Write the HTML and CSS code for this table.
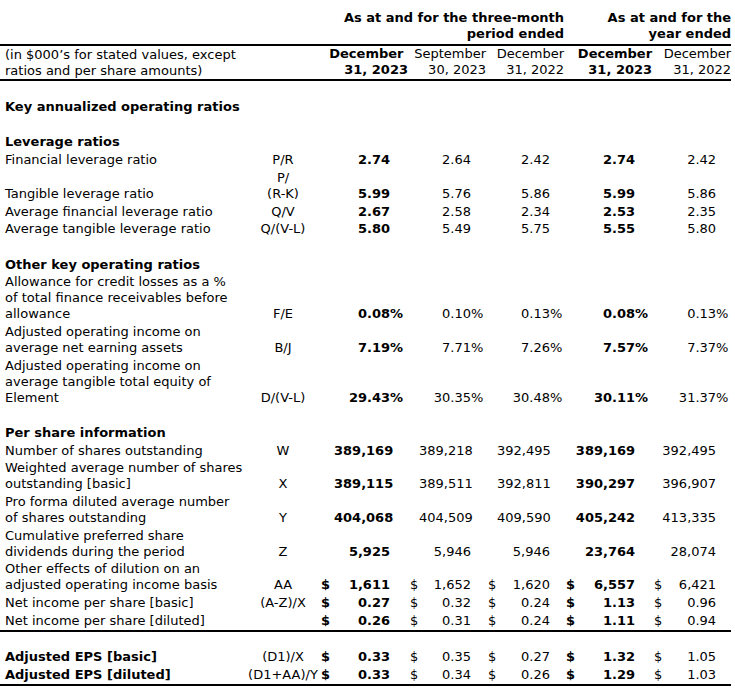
FILE: index.html
```html
<!DOCTYPE html>
<html>
<head>
<meta charset="utf-8">
<link rel="stylesheet" href="styles.css">
</head>
<body>
<table class="fin">
<colgroup>
<col class="c-label"><col class="c-form">
<col class="c-cur1"><col class="c-val1"><col class="c-pct1">
<col class="c-cur"><col class="c-val2"><col class="c-pct2">
<col class="c-cur"><col class="c-val3"><col class="c-pct3">
<col class="c-cur"><col class="c-val4"><col class="c-pct4">
<col class="c-cur5"><col class="c-val5"><col class="c-pct5">
</colgroup>
<tbody>
<tr class="rule">
<td></td><td></td>
<td colspan="9" class="hd b">As at and for the three-month<br>period ended</td>
<td colspan="6" class="hd b">As at and for the<br>year ended</td>
</tr>
<tr class="rule">
<td class="lbl">(in $000’s for stated values, except<br>ratios and per share amounts)</td><td></td>
<td colspan="3" class="hd b">December&nbsp;<br>31, 2023</td>
<td colspan="3" class="hd">September<br>30, 2023</td>
<td colspan="3" class="hd">December<br>31, 2022</td>
<td colspan="3" class="hd b">December<br>31, 2023</td>
<td colspan="3" class="hd">December<br>31, 2022</td>
</tr>
<tr class="gap"><td colspan="17">&nbsp;</td></tr>
<tr><td class="lbl b" colspan="2">Key annualized operating ratios</td><td colspan="15"></td></tr>
<tr class="gap"><td colspan="17">&nbsp;</td></tr>
<tr><td class="lbl b">Leverage ratios</td><td colspan="16"></td></tr>
<tr>
<td class="lbl">Financial leverage ratio</td><td class="frm">P/R</td>
<td></td><td class="v b">2.74</td><td></td>
<td></td><td class="v">2.64</td><td></td>
<td></td><td class="v">2.42</td><td></td>
<td></td><td class="v b">2.74</td><td></td>
<td></td><td class="v">2.42</td><td></td>
</tr>
<tr>
<td class="lbl">Tangible leverage ratio</td><td class="frm">P/<br>(R-K)</td>
<td></td><td class="v b">5.99</td><td></td>
<td></td><td class="v">5.76</td><td></td>
<td></td><td class="v">5.86</td><td></td>
<td></td><td class="v b">5.99</td><td></td>
<td></td><td class="v">5.86</td><td></td>
</tr>
<tr>
<td class="lbl">Average financial leverage ratio</td><td class="frm">Q/V</td>
<td></td><td class="v b">2.67</td><td></td>
<td></td><td class="v">2.58</td><td></td>
<td></td><td class="v">2.34</td><td></td>
<td></td><td class="v b">2.53</td><td></td>
<td></td><td class="v">2.35</td><td></td>
</tr>
<tr>
<td class="lbl">Average tangible leverage ratio</td><td class="frm">Q/(V-L)</td>
<td></td><td class="v b">5.80</td><td></td>
<td></td><td class="v">5.49</td><td></td>
<td></td><td class="v">5.75</td><td></td>
<td></td><td class="v b">5.55</td><td></td>
<td></td><td class="v">5.80</td><td></td>
</tr>
<tr class="gap"><td colspan="17">&nbsp;</td></tr>
<tr><td class="lbl b">Other key operating ratios</td><td colspan="16"></td></tr>
<tr>
<td class="lbl">Allowance for credit losses as a %<br>of total finance receivables before<br>allowance</td><td class="frm">F/E</td>
<td></td><td class="v b">0.08</td><td class="p b">%</td>
<td></td><td class="v">0.10</td><td class="p">%</td>
<td></td><td class="v">0.13</td><td class="p">%</td>
<td></td><td class="v b">0.08</td><td class="p b">%</td>
<td></td><td class="v">0.13</td><td class="p">%</td>
</tr>
<tr>
<td class="lbl">Adjusted operating income on<br>average net earning assets</td><td class="frm">B/J</td>
<td></td><td class="v b">7.19</td><td class="p b">%</td>
<td></td><td class="v">7.71</td><td class="p">%</td>
<td></td><td class="v">7.26</td><td class="p">%</td>
<td></td><td class="v b">7.57</td><td class="p b">%</td>
<td></td><td class="v">7.37</td><td class="p">%</td>
</tr>
<tr>
<td class="lbl">Adjusted operating income on<br>average tangible total equity of<br>Element</td><td class="frm">D/(V-L)</td>
<td></td><td class="v b">29.43</td><td class="p b">%</td>
<td></td><td class="v">30.35</td><td class="p">%</td>
<td></td><td class="v">30.48</td><td class="p">%</td>
<td></td><td class="v b">30.11</td><td class="p b">%</td>
<td></td><td class="v">31.37</td><td class="p">%</td>
</tr>
<tr class="gap"><td colspan="17">&nbsp;</td></tr>
<tr><td class="lbl b">Per share information</td><td colspan="16"></td></tr>
<tr>
<td class="lbl">Number of shares outstanding</td><td class="frm">W</td>
<td></td><td class="v b">389,169</td><td></td>
<td></td><td class="v">389,218</td><td></td>
<td></td><td class="v">392,495</td><td></td>
<td></td><td class="v b">389,169</td><td></td>
<td></td><td class="v">392,495</td><td></td>
</tr>
<tr>
<td class="lbl">Weighted average number of shares<br>outstanding [basic]</td><td class="frm">X</td>
<td></td><td class="v b">389,115</td><td></td>
<td></td><td class="v">389,511</td><td></td>
<td></td><td class="v">392,811</td><td></td>
<td></td><td class="v b">390,297</td><td></td>
<td></td><td class="v">396,907</td><td></td>
</tr>
<tr>
<td class="lbl">Pro forma diluted average number<br>of shares outstanding</td><td class="frm">Y</td>
<td></td><td class="v b">404,068</td><td></td>
<td></td><td class="v">404,509</td><td></td>
<td></td><td class="v">409,590</td><td></td>
<td></td><td class="v b">405,242</td><td></td>
<td></td><td class="v">413,335</td><td></td>
</tr>
<tr>
<td class="lbl">Cumulative preferred share<br>dividends during the period</td><td class="frm">Z</td>
<td></td><td class="v b">5,925</td><td></td>
<td></td><td class="v">5,946</td><td></td>
<td></td><td class="v">5,946</td><td></td>
<td></td><td class="v b">23,764</td><td></td>
<td></td><td class="v">28,074</td><td></td>
</tr>
<tr>
<td class="lbl">Other effects of dilution on an<br>adjusted operating income basis</td><td class="frm">AA</td>
<td class="cur b">$</td><td class="v b">1,611</td><td></td>
<td class="cur">$</td><td class="v">1,652</td><td></td>
<td class="cur">$</td><td class="v">1,620</td><td></td>
<td class="cur b">$</td><td class="v b">6,557</td><td></td>
<td class="cur">$</td><td class="v">6,421</td><td></td>
</tr>
<tr>
<td class="lbl">Net income per share [basic]</td><td class="frm">(A-Z)/X</td>
<td class="cur b">$</td><td class="v b">0.27</td><td></td>
<td class="cur">$</td><td class="v">0.32</td><td></td>
<td class="cur">$</td><td class="v">0.24</td><td></td>
<td class="cur b">$</td><td class="v b">1.13</td><td></td>
<td class="cur">$</td><td class="v">0.96</td><td></td>
</tr>
<tr class="rule">
<td class="lbl">Net income per share [diluted]</td><td class="frm"></td>
<td class="cur b">$</td><td class="v b">0.26</td><td></td>
<td class="cur">$</td><td class="v">0.31</td><td></td>
<td class="cur">$</td><td class="v">0.24</td><td></td>
<td class="cur b">$</td><td class="v b">1.11</td><td></td>
<td class="cur">$</td><td class="v">0.94</td><td></td>
</tr>
<tr class="gap"><td colspan="17">&nbsp;</td></tr>
<tr>
<td class="lbl b">Adjusted EPS [basic]</td><td class="frm">(D1)/X</td>
<td class="cur b">$</td><td class="v b">0.33</td><td></td>
<td class="cur">$</td><td class="v">0.35</td><td></td>
<td class="cur">$</td><td class="v">0.27</td><td></td>
<td class="cur b">$</td><td class="v b">1.32</td><td></td>
<td class="cur">$</td><td class="v">1.05</td><td></td>
</tr>
<tr class="rule">
<td class="lbl b">Adjusted EPS [diluted]</td><td class="frm">(D1+AA)/Y</td>
<td class="cur b">$</td><td class="v b">0.33</td><td></td>
<td class="cur">$</td><td class="v">0.34</td><td></td>
<td class="cur">$</td><td class="v">0.26</td><td></td>
<td class="cur b">$</td><td class="v b">1.29</td><td></td>
<td class="cur">$</td><td class="v">1.03</td><td></td>
</tr>
</tbody>
</table>
</body>
</html>
```
FILE: styles.css
```css
html, body {
  margin: 0;
  padding: 0;
  background: #ffffff;
}
body {
  padding-top: 10px;
  font-family: "DejaVu Sans", Verdana, sans-serif;
  font-size: 13px;
  line-height: 16px;
  color: #000000;
}
.fin {
  border-collapse: collapse;
  table-layout: fixed;
  width: 731px;
}
.fin td {
  padding: 0 0 1.7px 0;
  vertical-align: bottom;
  white-space: nowrap;
  overflow: visible;
}
.c-label { width: 247px; }
.c-form { width: 72px; }
.c-cur1 { width: 15px; }
.c-val1 { width: 56px; }
.c-pct1 { width: 18px; }
.c-cur { width: 11px; }
.c-val2 { width: 52px; }
.c-pct2 { width: 15px; }
.c-val3 { width: 53px; }
.c-pct3 { width: 14px; }
.c-val4 { width: 60px; }
.c-pct4 { width: 17px; }
.c-cur5 { width: 10px; }
.c-val5 { width: 54px; }
.c-pct5 { width: 15px; }

.fin tr.rule td {
  border-bottom: 2px solid #000000;
}
.fin tr.rule td.lbl,
.fin tr.rule td.frm,
.fin tr.rule td.v,
.fin tr.rule td.cur {
  padding-bottom: 0.7px;
}
.fin td.lbl {
  padding-left: 5px;
}
.fin td.frm {
  text-align: center;
}
.fin td.hd {
  text-align: right;
}
.fin td.v {
  text-align: right;
}
.fin td.p {
  text-align: left;
}
.fin td.cur {
  text-align: left;
  padding-left: 2px;
}
.b {
  font-weight: bold;
}
```
